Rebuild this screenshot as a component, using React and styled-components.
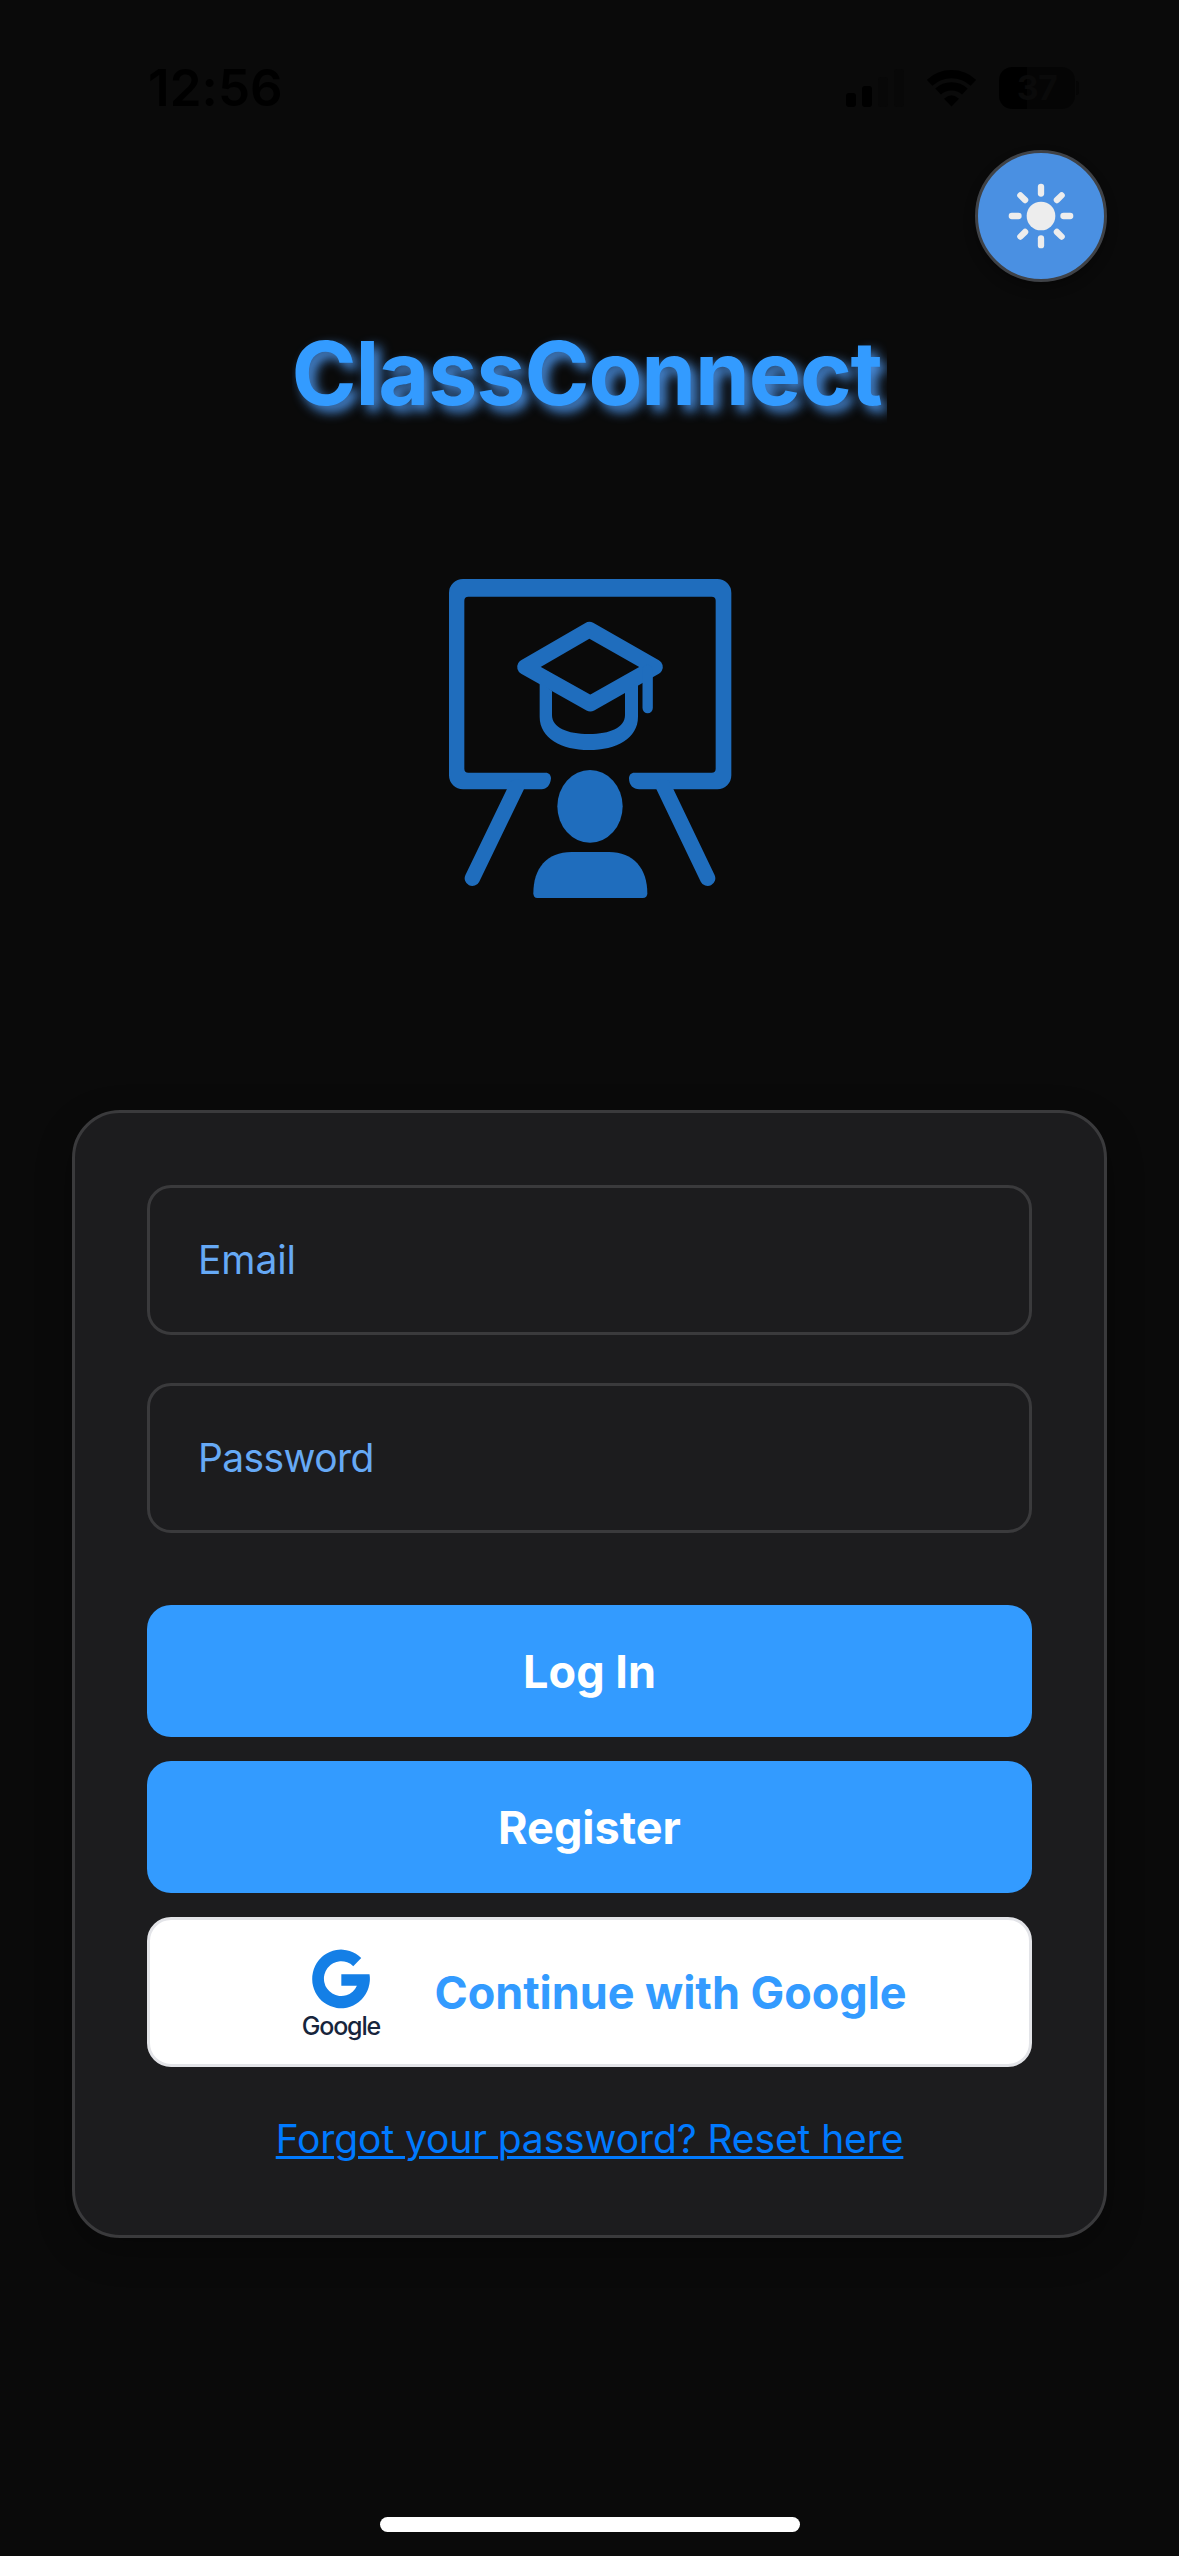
import React from 'react';
import styled, { createGlobalStyle } from 'styled-components';

const GlobalStyle = createGlobalStyle`
  * { box-sizing: border-box; }
  body {
    margin: 0;
    background: #0a0a0a;
    font-family: Inter, "Liberation Sans", sans-serif;
  }
`;

const Screen = styled.main`
  width: 1179px;
  height: 2556px;
  display: flex;
  flex-direction: column;
  align-items: center;
  background: #0a0a0a;
  overflow: hidden;
`;

const StatusBar = styled.header`
  width: 100%;
  height: 150px;
  padding: 25px 100px 0 148px;
  display: flex;
  align-items: center;
  justify-content: space-between;
`;

const Clock = styled.time`
  color: #000;
  font-size: 51px;
  font-weight: 600;
  line-height: 60px;
  letter-spacing: 0.1px;
`;

const StatusIcons = styled.div`
  display: flex;
  align-items: center;
  gap: 23px;
`;

const Battery = styled.div`
  display: flex;
  align-items: center;
  gap: 1px;
`;

const BatteryBody = styled.div`
  width: 76px;
  height: 42px;
  border-radius: 13px;
  display: flex;
  align-items: center;
  justify-content: center;
  background: linear-gradient(to right, #000 37%, #050505 37%);
  color: #0a0a0a;
  font-size: 34px;
  font-weight: 700;
  letter-spacing: -0.5px;
`;

const BatteryTip = styled.div`
  width: 3px;
  height: 14px;
  border-radius: 0 4px 4px 0;
  background: #060606;
`;

const Toolbar = styled.div`
  width: 100%;
  padding-right: 72px;
  display: flex;
  justify-content: flex-end;
`;

const ThemeButton = styled.button`
  width: 132px;
  height: 132px;
  padding: 0;
  border: 3px solid #3f4247;
  border-radius: 50%;
  background: #4a90e2;
  display: flex;
  align-items: center;
  justify-content: center;
  box-shadow: 0 6px 12px rgba(0, 0, 0, 0.3);
`;

const Title = styled.h1`
  width: 595px;
  height: 108px;
  margin: 37px 1px 0 0;
  overflow: hidden;
  white-space: nowrap;
  color: #339bff;
  font-size: 88px;
  font-weight: 700;
  line-height: 108px;
  letter-spacing: -1.12px;
  text-shadow: 6px 6px 12px #4a90e2;
`;

const Illustration = styled.svg`
  width: 320px;
  height: 350px;
  margin-top: 133px;
  fill: #1f6dbd;
  stroke: none;
`;

const Card = styled.form`
  width: 1035px;
  margin-top: 200px;
  padding: 72px;
  border: 3px solid #3a3a3c;
  border-radius: 48px;
  background: #1c1c1e;
  box-shadow: 0 12px 36px rgba(0, 0, 0, 0.3);
  display: flex;
  flex-direction: column;
`;

const Fields = styled.div`
  display: flex;
  flex-direction: column;
  gap: 48px;
`;

const Field = styled.input`
  width: 100%;
  height: 150px;
  padding: 0 48px 2px;
  border: 3px solid #3a3a3c;
  border-radius: 24px;
  outline: none;
  background: #1c1c1e;
  color: #fff;
  font-family: inherit;
  font-size: 39px;
  letter-spacing: ${(p) => p.$tracking};

  &::placeholder {
    color: #66a9f5;
    opacity: 1;
  }
`;

const Actions = styled.div`
  margin-top: 72px;
  display: flex;
  flex-direction: column;
  gap: 24px;
`;

const Button = styled.button`
  height: 132px;
  padding: 1px 0 0;
  border: 0;
  border-radius: 24px;
  background: #339bff;
  color: #fff;
  font-family: inherit;
  font-size: 45px;
  font-weight: 700;
  line-height: 54px;
`;

const GoogleButton = styled(Button)`
  height: 150px;
  padding: 2px 0 0;
  border: 3px solid #e3e4e8;
  background: #fff;
  color: #339bff;
  letter-spacing: -0.05px;
  display: flex;
  align-items: center;
  justify-content: center;
  gap: 24px;
`;

const GoogleLogo = styled.span`
  width: 138px;
  padding-top: 4px;
  display: flex;
  flex-direction: column;
  align-items: center;
`;

const GoogleWordmark = styled.span`
  margin-top: 1px;
  margin-right: 1px;
  color: #17253c;
  font-size: 25px;
  font-weight: 500;
  line-height: 30px;
  letter-spacing: -1.2px;
`;

const ResetLink = styled.a`
  margin-top: 48px;
  color: #007aff;
  font-size: 39px;
  line-height: 48px;
  letter-spacing: -0.1px;
  text-align: center;
  text-decoration: underline;
  text-decoration-thickness: 3px;
  text-underline-offset: 3px;
`;

const HomeIndicator = styled.div`
  width: 420px;
  height: 15px;
  margin: auto 0 24px;
  border-radius: 8px;
  background: #fff;
`;

function SignalIcon() {
  return (
    <svg width="58" height="38" viewBox="0 0 58 38">
      <rect x="0" y="24" width="10" height="14" rx="3" fill="#000" />
      <rect x="16" y="17" width="10" height="21" rx="3" fill="#000" />
      <rect x="32" y="8" width="10" height="30" rx="3" fill="#080808" />
      <rect x="48" y="0" width="10" height="38" rx="3" fill="#080808" />
    </svg>
  );
}

function WifiIcon() {
  return (
    <svg width="49" height="38" viewBox="320 86 150 114" fill="none" stroke="#000" strokeWidth="25">
      <path d="M328 127 A98 98 0 0 1 462 127" />
      <path d="M354 154 A60 60 0 0 1 436 154" />
      <path d="M372 176 Q395 154 418 176 L395 200Z" fill="#000" stroke="none" />
    </svg>
  );
}

function SunIcon() {
  return (
    <svg width="68" height="68" viewBox="-102 -102 204 204">
      <circle r="43" fill="#ededed" />
      {[0, 45, 90, 135, 180, 225, 270, 315].map((angle) => (
        <line
          key={angle}
          y1="-87.5"
          y2="-67.5"
          stroke="#ededed"
          strokeWidth="19"
          strokeLinecap="round"
          transform={`rotate(${angle})`}
        />
      ))}
    </svg>
  );
}

function ClassroomIllustration() {
  return (
    <Illustration viewBox="0 0 960 1050">
      <path d="M99 57H862A42 42 0 0 1 904 99V646A42 42 0 0 1 862 688H628C610 688 597 676 597 655C597 645 603 638 613 638H845Q857 638 857 626V122Q857 110 845 110H115Q103 110 103 122V626Q103 638 115 638H347C357 638 363 645 363 655C361 676 350 688 335 688H99A42 42 0 0 1 57 646V99A42 42 0 0 1 99 57Z" />
      <g fill="none" stroke="#1f6dbd" strokeLinecap="round" strokeLinejoin="round">
        <path d="M260 680L127 955M701 680L833 955" strokeWidth="46" />
        <path d="M478 209L675 321L481 431L285 321Z" strokeWidth="47" />
        <path d="M653 330V444" strokeWidth="31" />
      </g>
      <path d="M329 365V470C329 535 395 570 477 570C560 570 624 535 624 470V365L585 395V465C585 503 540 522 477 522C412 522 366 503 366 465V393Z" />
      <ellipse cx="480" cy="739" rx="98" ry="109" />
      <path d="M322 1014Q310 1014 310 1000C310 925 350 876 425 876H537C610 876 652 925 652 1000Q652 1014 638 1014Z" />
    </Illustration>
  );
}

function GoogleG() {
  return (
    <svg width="60" height="61" viewBox="95 84 180 184">
      <path
        fill="#147fe6"
        d="M246 111A87 88.5 0 1 0 271 160H186V195H233A52 52.5 0 1 1 222 136Z"
      />
    </svg>
  );
}

export default function App() {
  return (
    <>
      <GlobalStyle />
      <Screen>
        <StatusBar>
          <Clock>12:56</Clock>
          <StatusIcons>
            <SignalIcon />
            <WifiIcon />
            <Battery>
              <BatteryBody>37</BatteryBody>
              <BatteryTip />
            </Battery>
          </StatusIcons>
        </StatusBar>
        <Toolbar>
          <ThemeButton type="button" aria-label="Toggle theme">
            <SunIcon />
          </ThemeButton>
        </Toolbar>
        <Title>ClassConnect</Title>
        <ClassroomIllustration />
        <Card>
          <Fields>
            <Field type="email" placeholder="Email" $tracking="-0.1px" />
            <Field type="password" placeholder="Password" $tracking="-0.6px" />
          </Fields>
          <Actions>
            <Button type="button">Log In</Button>
            <Button type="button">Register</Button>
            <GoogleButton type="button">
              <GoogleLogo>
                <GoogleG />
                <GoogleWordmark>Google</GoogleWordmark>
              </GoogleLogo>
              Continue with Google
            </GoogleButton>
          </Actions>
          <ResetLink href="#">Forgot your password? Reset here</ResetLink>
        </Card>
        <HomeIndicator />
      </Screen>
    </>
  );
}
